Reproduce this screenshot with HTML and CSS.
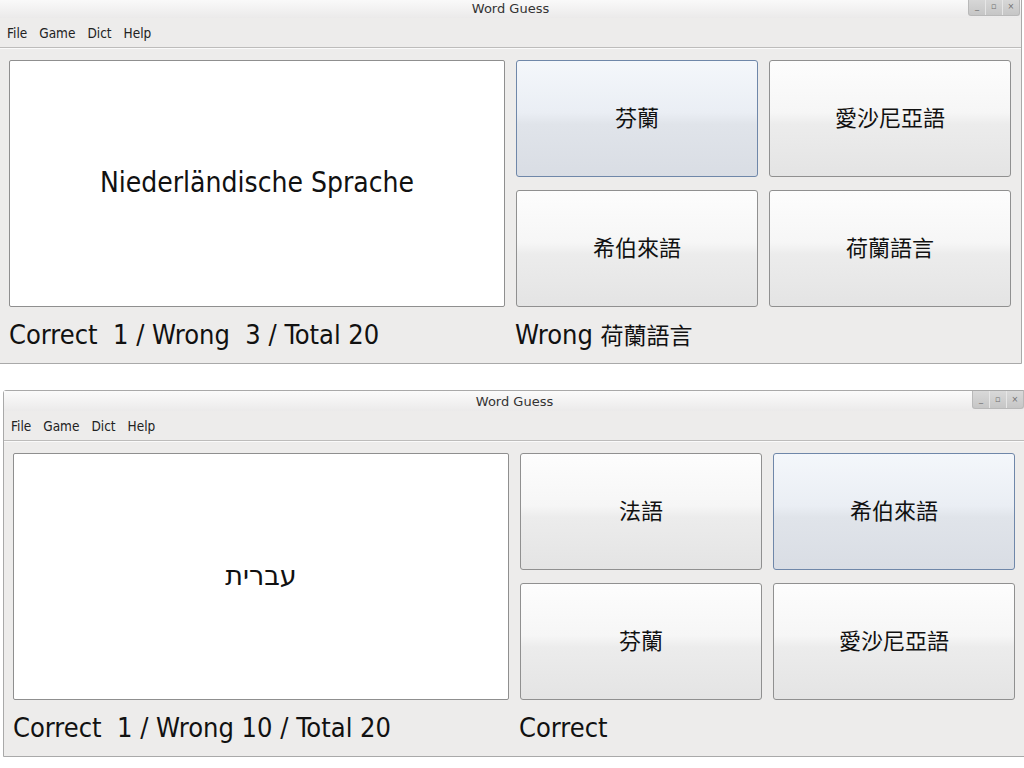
FILE: index.html
```html
<!DOCTYPE html>
<html lang="de">
<head>
    <meta charset="UTF-8">
    <title>Word Guess</title>
    <link rel="stylesheet" href="styles.css">
</head>
<body>
    <!-- first window: wrong answer -->
    <div class="window win-top">
        <div class="titlebar">
            <span class="title">Word Guess</span>
            <div class="wm-buttons">
                <span class="wm-btn">_</span><span class="wm-btn">&#9643;</span><span class="wm-btn">&#215;</span>
            </div>
        </div>
        <div class="menubar">
            <span>File</span><span>Game</span><span>Dict</span><span>Help</span>
        </div>
        <div class="content">
            <div class="word-box">Niederländische Sprache</div>
            <div class="answers">
                <button class="answer active">芬蘭</button>
                <button class="answer">愛沙尼亞語</button>
                <button class="answer">希伯來語</button>
                <button class="answer">荷蘭語言</button>
            </div>
            <div class="score">Correct  1 / Wrong  3 / Total 20</div>
            <div class="result">Wrong <span class="cjk">荷蘭語言</span></div>
        </div>
    </div>

    <!-- second window: correct answer -->
    <div class="window win-bottom">
        <div class="titlebar">
            <span class="title">Word Guess</span>
            <div class="wm-buttons">
                <span class="wm-btn">_</span><span class="wm-btn">&#9643;</span><span class="wm-btn">&#215;</span>
            </div>
        </div>
        <div class="menubar">
            <span>File</span><span>Game</span><span>Dict</span><span>Help</span>
        </div>
        <div class="content">
            <div class="word-box hebrew" dir="rtl">עברית</div>
            <div class="answers">
                <button class="answer">法語</button>
                <button class="answer active">希伯來語</button>
                <button class="answer">芬蘭</button>
                <button class="answer">愛沙尼亞語</button>
            </div>
            <div class="score">Correct  1 / Wrong 10 / Total 20</div>
            <div class="result">Correct</div>
        </div>
    </div>
</body>
</html>
```

FILE: styles.css
```css
body {
    margin: 0;
    background-color: #fff;
    font-family: "DejaVu Sans Condensed", "DejaVu Sans", "Noto Sans CJK TC", sans-serif;
    color: #111;
    overflow: hidden;
}

/* Окна лежат на "рабочем столе" */
.window {
    position: absolute;
    width: 1023px;
    height: 367px;
    box-sizing: border-box;
    border: 1px solid #a9a9a9;
    border-radius: 3px 3px 0 0;
    background-color: #edeceb;
    display: flex;
    flex-direction: column;
}

.win-top {
    left: -1px;
    top: -3px;
}

.win-bottom {
    left: 3px;
    top: 390px;
}

.titlebar {
    position: relative;
    height: 20px;
    display: flex;
    align-items: center;
    justify-content: center;
    background: linear-gradient(to bottom, #fbfbfb, #ebeaea);
}

.title {
    font-family: "DejaVu Sans", sans-serif;
    font-size: 13px;
    color: #333;
}

.wm-buttons {
    position: absolute;
    right: 1px;
    top: 0;
    display: flex;
    border: 1px solid #b9b9b9;
    border-top: none;
    border-radius: 0 0 3px 3px;
    background: linear-gradient(to bottom, #d9d9d9, #c6c6c6);
}

.wm-btn {
    width: 16px;
    height: 17px;
    font-size: 9px;
    line-height: 17px;
    text-align: center;
    color: #6e6e6e;
    border-left: 1px solid #e6e6e6;
}

.wm-btn:first-child {
    border-left: none;
}

.menubar {
    height: 29px;
    display: flex;
    align-items: center;
    gap: 12px;
    padding-left: 7px;
    font-size: 13.5px;
    color: #222;
    border-bottom: 1px solid #bdbcbb;
    box-shadow: 0 1px 0 #fafafa;
}

.content {
    display: grid;
    grid-template-columns: 496px 242px 242px;
    grid-template-rows: 247px 1fr;
    column-gap: 11px;
    padding: 12px 0 0 9px;
    flex: 1;
}

.word-box {
    background-color: #fff;
    border: 1px solid #8f8f8f;
    border-radius: 2px;
    display: flex;
    align-items: center;
    justify-content: center;
    font-size: 28px;
    padding-bottom: 2px;
}

.word-box.hebrew {
    font-family: "DejaVu Sans", sans-serif;
    font-size: 27px;
}

.answers {
    grid-column: 2 / 4;
    display: grid;
    grid-template-columns: 242px 242px;
    grid-template-rows: 117px 117px;
    gap: 13px 11px;
}

.answer {
    font-family: "Noto Sans CJK TC", sans-serif;
    font-size: 22px;
    color: #111;
    border: 1px solid #909090;
    border-radius: 3px;
    background: linear-gradient(to bottom, #fdfdfd 0%, #f6f6f6 45%, #ececec 55%, #e4e4e4 100%);
    padding: 0 0 5px 0;
}

.answer.active {
    border-color: #6f87a9;
    background: linear-gradient(to bottom, #f4f7fb 0%, #eaeef4 45%, #e0e4ea 55%, #d9dde4 100%);
}

.score,
.result {
    font-size: 27px;
    white-space: pre;
    display: flex;
    align-items: center;
    padding-bottom: 2px;
}

.result {
    grid-column: 2 / 4;
    margin-left: -1px;
}

.result .cjk {
    font-family: "Noto Sans CJK TC", sans-serif;
    font-size: 23px;
}
```
